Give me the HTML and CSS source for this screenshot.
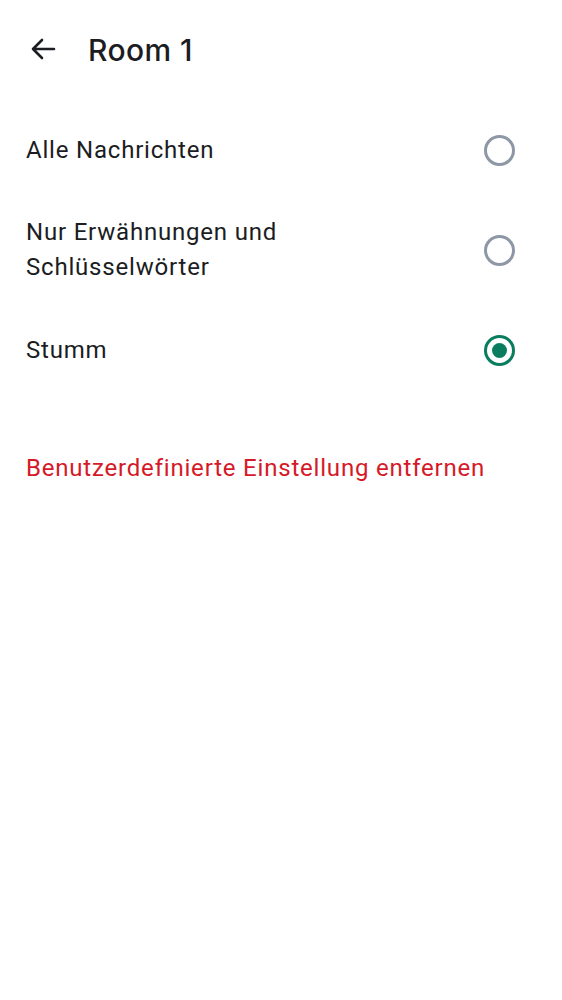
FILE: index.html
```html
<!DOCTYPE html>
<html>
<head>
<meta charset="utf-8">
<link rel="stylesheet" href="styles.css">
</head>
<body>
<header class="topbar">
  <svg class="back" width="28" height="28" viewBox="0 0 28 28">
    <path d="M25 14H4M13 5L4 14L13 23" fill="none" stroke="#1b1d22" stroke-width="2.6" stroke-linecap="round" stroke-linejoin="round"/>
  </svg>
  <h1 class="title">Room 1</h1>
</header>
<main class="list">
  <div class="row">
    <div class="label">Alle Nachrichten</div>
    <span class="radio"></span>
  </div>
  <div class="row">
    <div class="label">Nur Erwähnungen und Schlüsselwörter</div>
    <span class="radio"></span>
  </div>
  <div class="row">
    <div class="label">Stumm</div>
    <span class="radio checked"></span>
  </div>
  <div class="remove">Benutzerdefinierte Einstellung entfernen</div>
</main>
</body>
</html>
```
FILE: styles.css
```css
html, body {
  margin: 0;
  padding: 0;
  background: #ffffff;
}
body {
  font-family: Roboto, "Noto Sans", sans-serif;
  color: #1b1d22;
  width: 562px;
}
.topbar {
  height: 100px;
  display: flex;
  align-items: center;
  padding-left: 29px;
  box-sizing: border-box;
}
.back {
  display: block;
  margin-top: -2px;
}
.title {
  margin: -1px 0 0 31px;
  font-family: Inter, Roboto, sans-serif;
  font-weight: 500;
  font-size: 30px;
  letter-spacing: 0.4px;
  color: #1b1d22;
}
.list {
  display: flex;
  flex-direction: column;
}
.row {
  height: 100px;
  display: flex;
  align-items: center;
  justify-content: space-between;
  padding: 0 47px 0 26px;
}
.label {
  font-size: 24px;
  font-weight: 400;
  line-height: 35px;
  letter-spacing: 0.8px;
  max-width: 300px;
}
.radio {
  width: 25px;
  height: 25px;
  border: 3px solid #8d97a5;
  border-radius: 50%;
  display: flex;
  align-items: center;
  justify-content: center;
  flex: none;
}
.radio.checked {
  border-color: #0b7d5f;
}
.radio.checked::after {
  content: "";
  width: 15px;
  height: 15px;
  border-radius: 50%;
  background: #0b7d5f;
}
.remove {
  margin-top: 51px;
  padding-left: 26px;
  font-size: 24px;
  line-height: 34px;
  letter-spacing: 0.8px;
  color: #d51928;
}
```
